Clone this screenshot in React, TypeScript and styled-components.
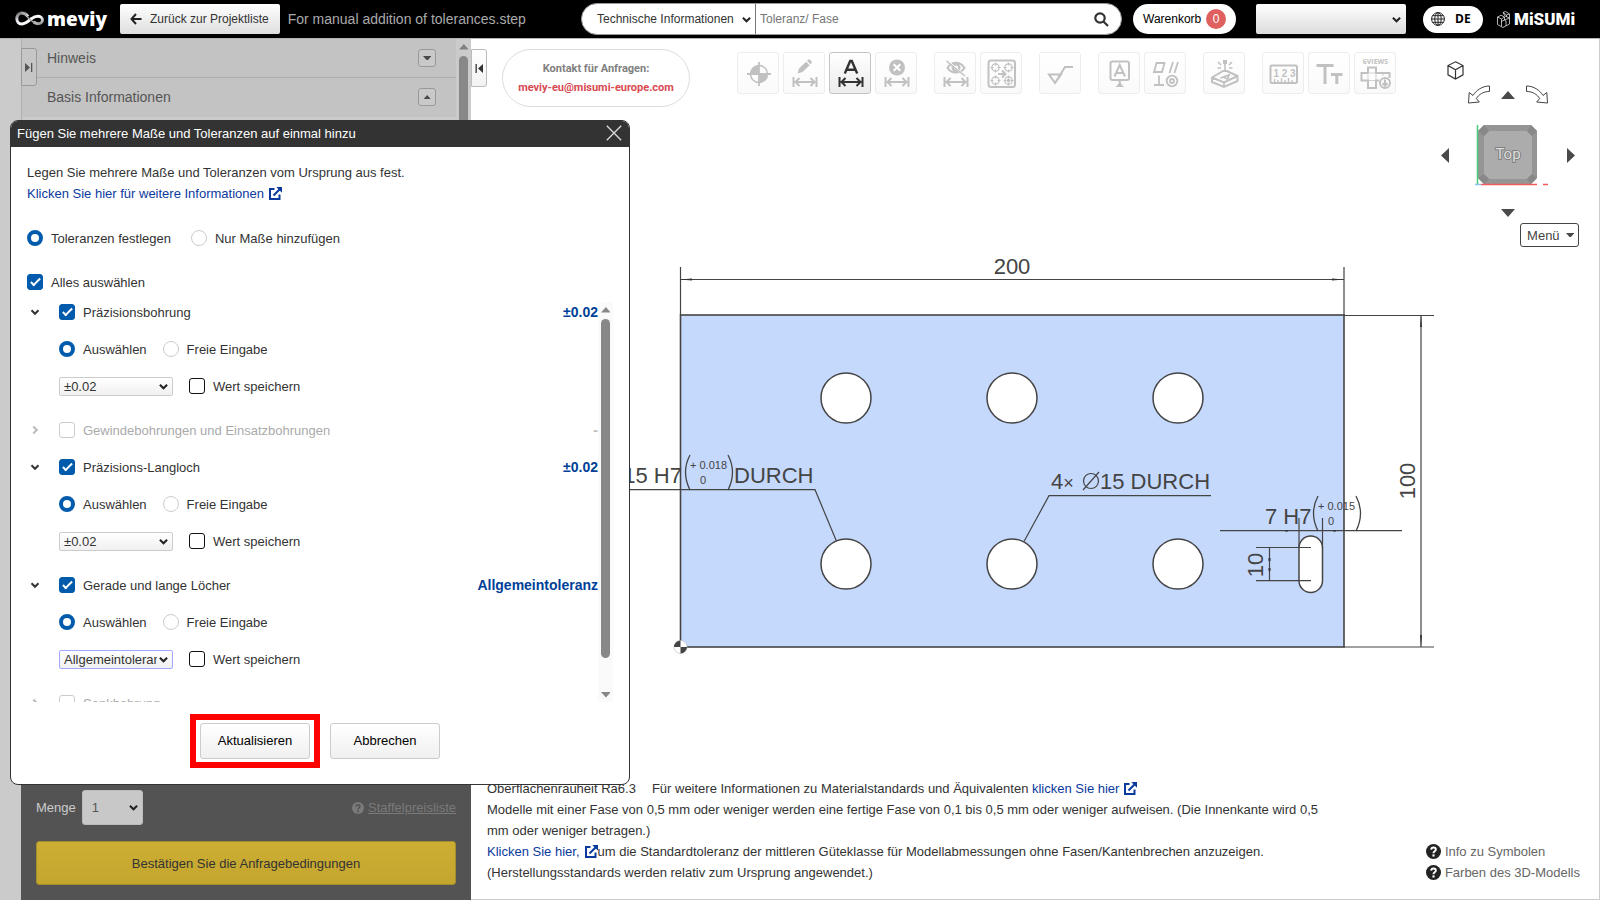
import React from 'react';
import styled, { createGlobalStyle, css } from 'styled-components';

const GlobalStyle = createGlobalStyle`
  *, *::before, *::after { box-sizing: border-box; }
  body { margin: 0; background: #fff; color: #333; font: 13px/21px "Liberation Sans", Arial, sans-serif; }
  button, input, select { font: inherit; color: inherit; margin: 0; }
  button { cursor: pointer; padding: 0; }
  a { color: #0a3a9e; text-decoration: none; }
  svg { display: block; flex: none; }
`;

/* ---------- frame ---------- */

const Page = styled.div`
  position: relative;
  display: flex;
  flex-direction: column;
  min-height: 100vh;
  overflow: hidden;
`;

const Main = styled.div`
  flex: 1;
  display: flex;
  border-top: 1px solid #b5b5b5;
`;

/* ---------- header ---------- */

const Header = styled.header`
  display: flex;
  align-items: center;
  height: 38px;
  padding: 0 29px 0 15px;
  background: #000;
  font-size: 12px;
`;

const Brand = styled.a`
  display: flex;
  align-items: center;
  gap: 2px;
  width: 105px;
  color: #fff;
  font: 800 19px/24px "Open Sans", sans-serif;
`;

const BackButton = styled.button`
  display: flex;
  align-items: center;
  gap: 8px;
  height: 30px;
  padding: 0 11px 0 10px;
  border: 0;
  border-radius: 2px;
  background: linear-gradient(#fff, #dedede);
  white-space: nowrap;
`;

const FileName = styled.span`
  margin-left: 8px;
  color: #aaa;
  font-size: 14px;
  white-space: nowrap;
`;

const Search = styled.form`
  display: flex;
  align-items: center;
  width: 541px;
  height: 32px;
  margin: 0 11px 0 auto;
  padding: 0 12px 0 15px;
  border: 1px solid #999;
  border-radius: 16px;
  background: #fff;
`;

const SelectBox = styled.span`
  position: relative;
  display: inline-flex;
  align-items: center;
`;

const SelectArrow = styled.svg`
  position: absolute;
  right: 5px;
  pointer-events: none;
`;

const SearchSelect = styled.select`
  appearance: none;
  width: 159px;
  height: 30px;
  padding: 0;
  border: 0;
  border-right: 1px solid #777;
  background: transparent;
`;

const SearchInput = styled.input`
  flex: 1;
  min-width: 0;
  height: 28px;
  padding: 0 4px;
  border: 0;
  background: transparent;
  &::placeholder { color: #757575; }
`;

const IconButton = styled.button`
  display: grid;
  place-items: center;
  border: 0;
  background: transparent;
`;

const Cart = styled.button`
  display: flex;
  align-items: center;
  justify-content: space-between;
  width: 103px;
  height: 30px;
  margin-right: 20px;
  padding: 0 10px;
  border: 0;
  border-radius: 15px;
  background: #fff;
  color: #000;
`;

const Badge = styled.span`
  width: 20px;
  height: 20px;
  border-radius: 10px;
  background: #e06060;
  color: #fff;
  line-height: 20px;
  text-align: center;
`;

const UserSelect = styled.select`
  appearance: none;
  width: 150px;
  height: 30px;
  border: 0;
  border-radius: 2px;
  background: linear-gradient(#fff, #dcdcdc);
`;

const Language = styled.button`
  display: flex;
  align-items: center;
  gap: 10px;
  width: 60px;
  height: 27px;
  margin: 0 14px 0 17px;
  padding: 0 8px;
  border: 0;
  border-radius: 14px;
  background: #fff;
  color: #000;
  font: 700 12px/16px "Open Sans", sans-serif;
`;

const Misumi = styled.a`
  display: flex;
  align-items: center;
  gap: 4px;
  width: 74px;
  color: #fff;
  font: 900 17px/24px Roboto, sans-serif;
`;

/* ---------- side panel ---------- */

const Gutter = styled.div`
  width: 21px;
  background: #cbcbcb;
`;

const SidePanel = styled.aside`
  position: relative;
  display: flex;
  flex-direction: column;
  width: 450px;
  background: #cbcbcb;
  color: #555;
`;

const SideScroll = styled.div`
  flex: 1;
  display: flex;
  align-items: stretch;
`;

const SideSections = styled.div`
  flex: 1;
  border-left: 1px solid #aeaeae;
`;

const SideRow = styled.div`
  display: flex;
  align-items: center;
  justify-content: space-between;
  height: 39px;
  padding: 0 20px 0 25px;
  border-bottom: 1px solid #adadad;
  background: #c3c3c3;
  font-size: 14px;
  &:last-child { border-bottom-color: #c3c3c3; }
`;

const SideToggle = styled.button`
  display: grid;
  place-items: center;
  width: 18px;
  height: 18px;
  border: 1px solid #999;
  border-radius: 3px;
  background: #c9c9c9;
`;

const ScrollTrack = styled.div<{ $tone?: string }>`
  display: flex;
  flex-direction: column;
  align-items: center;
  gap: 6px;
  width: 15px;
  padding: 5px 0 4px;
  background: ${(p) => p.$tone || '#fafafa'};
`;

const ScrollThumb = styled.div<{ $size?: number }>`
  width: 9px;
  border-radius: 5px;
  background: #888;
  ${(p) => (p.$size ? css`height: ${p.$size}px; margin-bottom: auto;` : css`flex: 1;`)}
`;

const EdgeTab = styled.button<{ $dim?: boolean }>`
  position: absolute;
  left: 0;
  top: ${(p) => (p.$dim ? 9 : 10)}px;
  display: grid;
  place-items: center;
  width: 16px;
  height: 38px;
  border: 1px solid ${(p) => (p.$dim ? '#999' : '#bbb')};
  border-radius: 0 3px 3px 0;
  background: ${(p) => (p.$dim ? '#c6c6c6' : 'linear-gradient(#fff, #f2f2f2)')};
`;

const OrderBar = styled.div`
  display: flex;
  flex-direction: column;
  gap: 16px;
  padding: 20px 15px 15px;
  background: #535353;
`;

const OrderRow = styled.div`
  display: flex;
  align-items: center;
  justify-content: space-between;
`;

const QuantityLabel = styled.label`
  display: flex;
  align-items: center;
  gap: 6px;
  color: #ccc;
`;

const QuantitySelect = styled.select`
  appearance: none;
  width: 61px;
  height: 35px;
  padding: 0 9px;
  border: 1px solid #bbb;
  border-radius: 3px;
  background: #c8c8c8;
  color: #555;
`;

const PriceLink = styled.a`
  display: flex;
  align-items: center;
  gap: 4px;
  color: #7a7a7a;
  span { text-decoration: underline; }
`;

const ConfirmButton = styled.button`
  height: 44px;
  border: 1px solid #a38d2c;
  border-radius: 3px;
  background: linear-gradient(#ccae33, #c4a62f);
  color: #333;
`;

/* ---------- viewer ---------- */

const Viewer = styled.main`
  position: relative;
  flex: 1;
  min-width: 0;
  display: flex;
  flex-direction: column;
  border: solid #ccc;
  border-width: 0 1px 1px 0;
`;

const ViewerTop = styled.div`
  display: flex;
  align-items: flex-start;
  height: 218px;
  padding: 10px 20px 0 31px;
`;

const Contact = styled.div`
  width: 188px;
  height: 58px;
  padding-top: 9px;
  border: 1px solid #ddd;
  border-radius: 29px;
  color: #808080;
  font: 700 11px/19px Roboto, "Liberation Sans", sans-serif;
  text-align: center;
  white-space: nowrap;
  a { display: block; color: #d84a52; }
`;

const Toolbar = styled.div`
  display: flex;
  gap: 17px;
  margin: 3px auto 0 47px;
`;

const ToolGroup = styled.div`
  display: flex;
  gap: 4px;
`;

const Tool = styled.button<{ $active?: boolean }>`
  display: grid;
  place-items: center;
  width: 42px;
  height: 42px;
  border: 1px solid ${(p) => (p.$active ? '#c4c4c4' : '#ededed')};
  border-radius: 3px;
  background: ${(p) => (p.$active ? 'linear-gradient(#fff, #ececec)' : 'linear-gradient(#fff, #fafafa)')};
  color: ${(p) => (p.$active ? '#333' : '#c1c1c1')};
`;

const Navigator = styled.div`
  display: flex;
  flex-direction: column;
  width: 142px;
  padding-top: 12px;
`;

const HomeView = styled(IconButton)`
  align-self: flex-start;
  margin-left: 10px;
`;

const NavRow = styled.div<{ $gap: number; $top: number }>`
  display: flex;
  align-items: center;
  justify-content: center;
  gap: ${(p) => p.$gap}px;
  margin-top: ${(p) => p.$top}px;
`;

const MenuButton = styled.button`
  display: flex;
  align-items: center;
  align-self: flex-end;
  gap: 6px;
  height: 24px;
  margin-top: 6px;
  padding: 0 4px 0 6px;
  border: 1px solid #444;
  border-radius: 3px;
  background: #fff;
  color: #444;
`;

const Stage = styled.div`
  flex: 1;
  display: flex;
  svg { overflow: visible; }
`;

const Notes = styled.footer`
  display: flex;
  align-items: flex-end;
  justify-content: space-between;
  padding: 0 19px 16px 16px;
`;

const NoteText = styled.div`
  max-width: 835px;
  p { margin: 0; }
`;

const InlineLink = styled.a`
  white-space: nowrap;
  svg { display: inline-block; vertical-align: -2px; margin-left: 5px; }
`;

const Spaced = styled.span`
  margin-left: 16px;
`;

const HelpLinks = styled.nav`
  a { display: flex; align-items: center; gap: 4px; color: #666; }
`;

/* ---------- dialog ---------- */

const Dialog = styled.section`
  position: absolute;
  left: 10px;
  top: 120px;
  width: 620px;
  border: 1px solid #333;
  border-radius: 8px;
  overflow: hidden;
  background: #fff;
`;

const DialogTitle = styled.div`
  display: flex;
  align-items: center;
  justify-content: space-between;
  height: 26px;
  padding: 0 7px 2px 6px;
  background: #333;
  color: #fff;
  h1 { margin: 0; font-size: 13px; font-weight: 400; }
`;

const DialogBody = styled.div`
  padding: 15px 16px 16px;
  p { margin: 0; }
`;

const Row = styled.div<{ $gap?: number; $top?: number; $indent?: boolean }>`
  display: flex;
  align-items: center;
  height: 20px;
  gap: ${(p) => p.$gap || 16}px;
  margin-top: ${(p) => p.$top || 0}px;
  padding-left: ${(p) => (p.$indent ? 32 : 0)}px;
`;

const Choice = styled.label<{ $off?: boolean }>`
  display: flex;
  align-items: center;
  gap: 8px;
  color: ${(p) => (p.$off ? '#aaa' : '#333')};
  white-space: nowrap;
`;

const Radio = styled.input.attrs({ type: 'radio' })`
  appearance: none;
  width: 16px;
  height: 16px;
  border: 1px solid #ccc;
  border-radius: 50%;
  background: #fff;
  &:checked { border: 4px solid #005bac; }
`;

const Check = styled.input.attrs({ type: 'checkbox' })`
  appearance: none;
  display: grid;
  place-items: center;
  width: 16px;
  height: 16px;
  border: 1px solid #111;
  border-radius: 3px;
  background: #fff;
  &:disabled { border-color: #ccc; }
  &:checked { border-color: #005bac; background: #005bac; }
  &:checked::after {
    content: '';
    width: 5px;
    height: 10px;
    margin-bottom: 3px;
    border: solid #fff;
    border-width: 0 2px 2px 0;
    rotate: 45deg;
  }
`;

const ListFrame = styled.div`
  display: flex;
  height: 400px;
  margin-top: 10px;
`;

const List = styled.div`
  flex: 1;
  overflow: hidden;
`;

const Group = styled.section<{ $open: boolean }>`
  display: flex;
  flex-direction: column;
  gap: 17px;
  padding-bottom: ${(p) => (p.$open ? 24 : 17)}px;
`;

const Expander = styled(IconButton)`
  width: 16px;
  height: 16px;
`;

const Value = styled.strong<{ $off?: boolean }>`
  margin-left: auto;
  color: ${(p) => (p.$off ? '#bbb' : '#003f98')};
  font-size: 14px;
`;

const ToleranceSelect = styled.select<{ $focus?: boolean }>`
  appearance: none;
  width: 114px;
  height: 19px;
  padding: 0 15px 0 4px;
  border: 1px solid ${(p) => (p.$focus ? '#a0a8ff' : '#ccc')};
  border-radius: 2px;
  background: linear-gradient(#fff, #f0f0f0);
  line-height: 17px;
`;

const Actions = styled.div`
  display: flex;
  align-items: center;
  gap: 10px;
  margin-top: 12px;
  padding-left: 163px;
`;

const Highlight = styled.div`
  padding: 3px 4px;
  border: 6px solid #f00;
`;

const ActionButton = styled.button`
  display: block;
  width: 110px;
  height: 36px;
  padding-bottom: 2px;
  border: 1px solid #ccc;
  border-radius: 3px;
  background: linear-gradient(#fff, #f0f0f0);
  color: #000;
`;

/* ---------- icons ---------- */

const Chevron = ({ dir = 'down', color = '#333' }: { dir?: 'down' | 'right'; color?: string }) => (
  <svg width="10" height="10" viewBox="0 0 10 10" fill="none" stroke={color} strokeWidth="2">
    <path d={dir === 'down' ? 'M1.5 3.3 5 6.8 8.5 3.3' : 'M3.3 1.5 6.8 5 3.3 8.5'} />
  </svg>
);

const DropArrow = () => (
  <SelectArrow width="9" height="9" viewBox="0 0 10 10" fill="none" stroke="#222" strokeWidth="2.200">
    <path d="M1 3 5 7 9 3" />
  </SelectArrow>
);

const triangles = {
  up: 'M0 8 7 0 14 8Z',
  down: 'M0 0H14L7 8Z',
  left: 'M8 0V15L0 7.5Z',
  right: 'M0 0V15L8 7.5Z',
};

const Triangle = ({ dir, scale = 1, color = '#4a4a4a' }: { dir: keyof typeof triangles; scale?: number; color?: string }) => {
  const [w, h] = dir === 'up' || dir === 'down' ? [14, 8] : [8, 15];
  return (
    <svg width={w * scale} height={h * scale} viewBox={`0 0 ${w} ${h}`} fill={color}>
      <path d={triangles[dir]} />
    </svg>
  );
};

const ExternalIcon = () => (
  <svg width="13" height="13" viewBox="0 0 13 13" fill="none" stroke="#0a3a9e" strokeWidth="2">
    <path d="M5.5 2H1v10h9.500V7.500M4.500 8.500 11 2" />
    <path d="M7.300 0H13v5.700Z" fill="#0a3a9e" stroke="none" />
  </svg>
);

const HelpIcon = ({ size = 14, color, mark }: { size?: number; color: string; mark: string }) => (
  <svg width={size} height={size} viewBox="0 0 14 14">
    <circle cx="7" cy="7" r="7" fill={color} />
    <path d="M4.800 5.300C5 2.600 9.200 2.700 9.200 5.200 9.200 6.900 7 6.800 7 8.600" fill="none" stroke={mark} strokeWidth="1.800" />
    <rect x="6" y="9.700" width="2" height="2" fill={mark} />
  </svg>
);

const MeviyMark = () => (
  <svg width="30" height="18" viewBox="0 0 30 18" fill="none">
    <defs>
      <linearGradient id="loop" x1="0" y1="0" x2="1" y2="1">
        <stop offset="0" stopColor="#666" />
        <stop offset=".35" stopColor="#e6e2ea" />
        <stop offset=".6" stopColor="#fff" />
        <stop offset="1" stopColor="#888" />
      </linearGradient>
    </defs>
    <path d="M13 6.500C11.500 4.300 9.500 3 6.800 3 3.500 3 1.800 5.700 1.800 8.500c0 3.200 2 5.500 4.800 5.500 4 0 6.500-3 9.700-5.200 2.500-1.800 4.200-2.600 6.200-2.600 3 0 5 1.700 5 3.800s-2 3.800-4.300 3.800c-1.800 0-3.200-.8-4.700-2" stroke="url(#loop)" strokeWidth="3" />
    <path d="M6 2.500C10 2 11.500 7 15 9.500c1.500 1 3 2.500 5 3.500" stroke="#aaa" strokeWidth="1.500" />
  </svg>
);

const MisumiMark = () => (
  <svg width="13" height="17" viewBox="0 0 13 17" fill="none" stroke="#ddd" strokeWidth=".8">
    <path d="M.5 6 4 4.300 7.500 6v3L12.500 7v6L6 16.500.5 13.500ZM.5 6 4.500 8v7.500M4.500 8l3-2M4.500 10.500 7.500 9M6 1.500 8.500.5 12.500 3v4L8 5ZM6 1.500 9.500 4v2M9.500 4l3-1M7.500 9 9 10v5" />
  </svg>
);

const GlobeIcon = () => (
  <svg width="14" height="14" viewBox="0 0 14 14" fill="none" stroke="#222">
    <circle cx="7" cy="7" r="6.400" />
    <ellipse cx="7" cy="7" rx="3.200" ry="6.400" />
    <path d="M7 .5v13M.5 7h13M1.500 3.700h11M1.500 10.300h11" />
  </svg>
);

const DimArrow = () => (
  <path d="M9.500 24v10M32.500 24v10M11.500 29h19M15.500 25l-4 4 4 4M26.500 25l4 4-4 4" strokeWidth="2" />
);

const ToolIcon = ({ children }: { children: React.ReactNode }) => (
  <svg width="42" height="42" viewBox="0 0 42 42" fill="none" stroke="currentColor" strokeWidth="2">
    {children}
  </svg>
);

const tools: { label: string; active?: boolean; icon: React.ReactNode }[][] = [
  [
    {
      label: 'Ursprung',
      icon: (
        <>
          <circle cx="21" cy="21" r="8.500" strokeWidth="1.500" />
          <path d="M21 9v24M9 21h24" strokeWidth="1.800" />
          <path d="M21 21h-8.500a8.500 8.500 0 0 1 8.500-8.500ZM21 21h8.500a8.500 8.500 0 0 1-8.500 8.500Z" fill="currentColor" stroke="none" />
        </>
      ),
    },
    {
      label: 'Maß bearbeiten',
      icon: (
        <>
          <path d="M13.500 20.500 15 15.500 22 8.800 25.700 12.300 18.500 19Z M23 7.800l1-1c1.500-1 4.500 1.500 3.500 3.500l-1 1Z" fill="currentColor" stroke="none" />
          <DimArrow />
        </>
      ),
    },
    {
      label: 'Mehrere Maße',
      active: true,
      icon: (
        <>
          <path d="M14.800 20.500 20.200 8h1.600L27.200 20.500M16.500 16.800h9" strokeWidth="2.400" />
          <DimArrow />
        </>
      ),
    },
    {
      label: 'Maß löschen',
      icon: (
        <>
          <circle cx="21" cy="14.500" r="8" fill="currentColor" stroke="none" />
          <path d="m17.700 11.200 6.600 6.600M24.300 11.200l-6.600 6.600" stroke="#fff" />
          <DimArrow />
        </>
      ),
    },
  ],
  [
    {
      label: 'Maß ausblenden',
      icon: (
        <>
          <path d="M12.500 15c4-7 13-7 17 0-4 6-13 6-17 0Z" />
          <circle cx="21" cy="14.500" r="3.300" strokeWidth="2.400" />
          <path d="M13 8.500 29.500 22.500" stroke="#fff" />
          <path d="M11.500 8 30 23" strokeWidth="1.600" />
          <DimArrow />
        </>
      ),
    },
    {
      label: 'Bohrungen gruppieren',
      icon: (
        <>
          <rect x="7.500" y="7.500" width="26.500" height="26.500" rx="2.500" />
          {[[14.5, 14.5], [27.5, 14.5], [14.5, 27.5], [27.5, 27.5]].map(([x, y]) => (
            <g key={`${x}-${y}`} strokeWidth="1.200">
              <circle cx={x} cy={y} r="3.700" />
              <path d={`M${x - 5} ${y}h3M${x + 2} ${y}h3M${x} ${y - 5}v3M${x} ${y + 2}v3`} />
            </g>
          ))}
          <circle cx="27.500" cy="27.500" r="1.800" fill="currentColor" stroke="none" />
          <path d="M17 21h7M21 17.500l3.500 3.500-3.500 3.500" />
        </>
      ),
    },
  ],
  [{ label: 'Oberflächenrauheit', icon: <path d="M9 21.500h12L15 30ZM15 30 25 14h8" /> }],
  [
    {
      label: 'Beschriftung',
      icon: (
        <>
          <rect x="11.500" y="8.500" width="18.500" height="18.500" rx="2" />
          <path d="M15.500 23.500 20.700 12 26 23.500M17.200 20h7" />
          <path d="M20.700 27v3" />
          <path d="M16.500 34l2-2 2.300-3.500L23 32l2 2Z" fill="currentColor" stroke="none" />
        </>
      ),
    },
    {
      label: 'Form- und Lagetoleranz',
      icon: (
        <>
          <path d="M11.500 10h8l-2.500 9h-8ZM28 9l-3.500 11M33 9l-3.500 11M9 32h10M14 22.500V32" strokeWidth="1.800" />
          <circle cx="27" cy="28" r="5.300" strokeWidth="1.800" />
          <circle cx="27" cy="28" r="2" strokeWidth="1.800" />
        </>
      ),
    },
  ],
  [
    {
      label: 'Gravur',
      icon: (
        <>
          <path d="M8 24.500 19 18h4l10.500 5v5L20 34 8 29ZM8 24.500l12 5 13.500-6.500M20 29.500V34" />
          <path d="m16.500 25 8.500-3-1.500 4.500M19.500 24l3.500 2" strokeWidth="1.800" />
          <path d="M21 7v4" strokeWidth="4" />
          <path d="M21 11v6M14 9l3 3M28 9l-3 3M13.500 15h3.500M28.500 15H25" strokeWidth="1.600" />
        </>
      ),
    },
  ],
  [
    {
      label: 'Messen',
      icon: (
        <>
          <rect x="7.500" y="12.500" width="26.500" height="17.500" rx="1.500" />
          <path d="M11.500 30v-4M15 30v-3M18.500 30v-5M22 30v-3M25.500 30v-5M29 30v-3" strokeWidth="1.300" />
          <text x="21.500" y="24" textAnchor="middle" fontSize="10" fontWeight="700" fill="currentColor" stroke="none">1 2 3</text>
        </>
      ),
    },
    { label: 'Textgröße', icon: <path d="M7.500 12.500h17M16 12.500V31M22 21.500h11.500M27.800 21.500V31" strokeWidth="3" /> },
    {
      label: 'Sechs Ansichten',
      icon: (
        <>
          <text x="20.500" y="11" textAnchor="middle" fontSize="7" fontWeight="700" fontFamily="Open Sans" fill="currentColor" stroke="none">6VIEWS</text>
          <path d="M13 20v-5.500h8V20h13.500v5M24 27.500h-3V35h-8v-7.500H6.500V20H13" />
          <path d="M13 20v7.500M21 20v7.500M13 20h8M13 27.500h8M28 20v3" strokeWidth=".7" />
          <circle cx="30" cy="30" r="5" />
          <path d="M30 26.500v6M27.500 30.300l2.500 2.500 2.500-2.500" />
        </>
      ),
    },
  ],
];

/* ---------- view cube ---------- */

const RotateArrow = ({ flip }: { flip?: boolean }) => (
  <svg width="22" height="19" viewBox="0 0 22 19" fill="#fff" stroke="#444">
    <path transform={flip ? 'translate(22 0) scale(-1 1)' : undefined} d="M21.500 1C14 1 8 5.500 5 10.500L1.200 7.500.5 18l10.800-1-3-3.500C11 9.500 15 6.500 21.500 6.500Z" />
  </svg>
);

const ViewCube = () => (
  <svg width="86" height="73" viewBox="-10 0 86 73">
    <path d="M9 6h47l6 6v47l-6 6H9l-6-6V12Z" fill="#959595" />
    <path d="M14 12h38l5 5v38l-5 5H14l-5-5V17Z" fill="#acacac" />
    <path d="M3 12l6-6 5 6-5 5ZM56 6l6 6-5 5-5-5ZM3 59l6 6 5-5-5-5ZM62 59l-6 6-4-5 5-5Z" fill="#888" />
    <path d="M2.500 -6v5M2.500 6v59" stroke="#4c7" strokeWidth="1.500" />
    <path d="M6 65.500h56M68 65.500h5" stroke="#f15b5b" strokeWidth="1.500" />
    <path d="M0 65.500h6" stroke="#8bc4f0" strokeWidth="1.500" />
    <text x="33" y="40" textAnchor="middle" fontSize="15" fontFamily="Roboto, sans-serif" fill="#ddd" stroke="#808080" strokeWidth="2" paintOrder="stroke">Top</text>
  </svg>
);

/* ---------- part drawing ---------- */

const Deviation = ({ x, y, upper, width }: { x: number; y: number; upper: string; width: number }) => (
  <g>
    <path d={`M${x + 5} ${y - 28}q-9 17 0 35M${x + width - 5} ${y - 28}q9 17 0 35`} fill="none" stroke="#444" strokeWidth="1.300" />
    <text x={x + 5} y={y - 14} fontSize="11">{upper}</text>
    <text x={x + 15} y={y + 1} fontSize="11">0</text>
  </g>
);

const PartDrawing = () => (
  <svg width="971" height="404" viewBox="471 257 971 404" fontSize="22" fill="#444" fontFamily="Liberation Sans, sans-serif">
    <rect x="680.500" y="315" width="663.500" height="332" fill="#c5d9fd" stroke="#444" strokeWidth="1.600" />
    <g fill="#fff" stroke="#444" strokeWidth="1.500">
      {[846, 1012, 1178].map((x) => [398, 564].map((y) => <circle key={`${x}-${y}`} cx={x} cy={y} r="25" />))}
      <rect x="1299" y="536" width="23.500" height="56.500" rx="11.700" />
    </g>
    <g fill="none" stroke="#444" strokeWidth="1.200">
      <path d="M680.500 267v48M1344 267v48M680.500 279.500H1344" />
      <path d="M1344 315.500h90M1344 647h90M1421 315v332" />
      <path d="M600 489.700h215l21.500 51.500M1024 541.500l25-45.800h162" />
      <path d="M1220 530.700h182M1299 518v30M1322.500 518v30" />
      <path d="M1256 547.500h55M1256 580.700h55M1269.500 547.500v33.200" />
    </g>
    <g fill="#333">
      <path d="M680 279.500l12-1v2ZM1344 279.500l-12-1v2ZM1421 315l-1 12h2ZM1421 647l-1-12h2Z" />
      <path d="M1288 530h-3v1.500h3ZM1336 530h-3v1.500h3ZM1268.500 558h2v3h-2ZM1268.500 568h2v3h-2Z" />
    </g>
    <text x="1012" y="274" textAnchor="middle">200</text>
    <text transform="translate(1415 481) rotate(-90)" textAnchor="middle">100</text>
    <text transform="translate(1263 565) rotate(-90)" textAnchor="middle">10</text>
    <text x="682" y="483" textAnchor="end">15 H7</text>
    <Deviation x={685} y={483} upper="+ 0.018" width={48} />
    <text x="734" y="483">DURCH</text>
    <text x="1051" y="489">4<tspan fontSize="18">×</tspan></text>
    <g fill="none" stroke="#444" strokeWidth="1.200">
      <circle cx="1091" cy="481" r="7.500" />
      <path d="M1083 490l16-18" />
    </g>
    <text x="1100" y="489">15 DURCH</text>
    <text x="1265" y="524">7 H7</text>
    <Deviation x={1313} y={524} upper="+ 0.015" width={48} />
    <circle cx="680.500" cy="647" r="6.500" fill="#fff" stroke="#bbb" strokeWidth=".6" />
    <path d="M680.500 647H674a6.500 6.500 0 0 1 6.500-6.500ZM680.500 647h6.500a6.500 6.500 0 0 1-6.500 6.500Z" fill="#444" />
  </svg>
);

/* ---------- tolerance list ---------- */

interface Feature {
  name: string;
  value: string;
  open: boolean;
  focus?: boolean;
}

const features: Feature[] = [
  { name: 'Präzisionsbohrung', value: '±0.02', open: true },
  { name: 'Gewindebohrungen und Einsatzbohrungen', value: '-', open: false },
  { name: 'Präzisions-Langloch', value: '±0.02', open: true },
  { name: 'Gerade und lange Löcher', value: 'Allgemeintoleranz', open: true, focus: true },
  { name: 'Senkbohrung', value: '', open: false },
];

const FeatureGroup = ({ name, value, open, focus }: Feature) => (
  <Group $open={open}>
    <Row>
      <Expander type="button" aria-label={name} aria-expanded={open}>
        <Chevron dir={open ? 'down' : 'right'} color={open ? '#333' : '#bbb'} />
      </Expander>
      <Choice $off={!open}>
        <Check defaultChecked={open} disabled={!open} />
        {name}
      </Choice>
      <Value $off={!open}>{value}</Value>
    </Row>
    {open && (
      <>
        <Row $indent>
          <Choice><Radio name={name} defaultChecked />Auswählen</Choice>
          <Choice><Radio name={name} />Freie Eingabe</Choice>
        </Row>
        <Row $indent>
          <SelectBox>
            <ToleranceSelect $focus={focus} aria-label={`Toleranz ${name}`}>
              <option>{value}</option>
            </ToleranceSelect>
            <DropArrow />
          </SelectBox>
          <Choice><Check />Wert speichern</Choice>
        </Row>
      </>
    )}
  </Group>
);

const ToleranceDialog = () => (
  <Dialog role="dialog" aria-labelledby="dialog-title">
    <DialogTitle>
      <h1 id="dialog-title">Fügen Sie mehrere Maße und Toleranzen auf einmal hinzu</h1>
      <IconButton type="button" aria-label="Schließen">
        <svg width="16" height="16" viewBox="0 0 16 16" stroke="#ddd" strokeWidth="1.300">
          <path d="M.8.8l14.400 14.400M15.200.8.8 15.200" />
        </svg>
      </IconButton>
    </DialogTitle>
    <DialogBody>
      <p>Legen Sie mehrere Maße und Toleranzen vom Ursprung aus fest.</p>
      <p><InlineLink href="#info">Klicken Sie hier für weitere Informationen<ExternalIcon /></InlineLink></p>
      <Row $gap={20} $top={24}>
        <Choice><Radio name="mode" defaultChecked />Toleranzen festlegen</Choice>
        <Choice><Radio name="mode" />Nur Maße hinzufügen</Choice>
      </Row>
      <Row $top={24}>
        <Choice><Check defaultChecked />Alles auswählen</Choice>
      </Row>
      <ListFrame>
        <List>
          {features.map((f) => <FeatureGroup key={f.name} {...f} />)}
        </List>
        <ScrollTrack>
          <Triangle dir="up" scale={0.7} color="#888" />
          <ScrollThumb $size={339} />
          <Triangle dir="down" scale={0.7} color="#888" />
        </ScrollTrack>
      </ListFrame>
      <Actions>
        <Highlight><ActionButton type="button">Aktualisieren</ActionButton></Highlight>
        <ActionButton type="button">Abbrechen</ActionButton>
      </Actions>
    </DialogBody>
  </Dialog>
);

/* ---------- page ---------- */

const TopBar = () => (
  <Header>
    <Brand href="#home"><MeviyMark />meviy</Brand>
    <BackButton type="button">
      <svg width="12" height="12" viewBox="0 0 12 12" fill="none" stroke="#222" strokeWidth="2">
        <path d="M11.500 6H2M6 1 1.500 6 6 11" />
      </svg>
      Zurück zur Projektliste
    </BackButton>
    <FileName>For manual addition of tolerances.step</FileName>
    <Search>
      <SelectBox>
        <SearchSelect aria-label="Suchbereich"><option>Technische Informationen</option></SearchSelect>
        <DropArrow />
      </SelectBox>
      <SearchInput aria-label="Suche" placeholder="Toleranz/ Fase" />
      <IconButton type="button" aria-label="Suchen">
        <svg width="15" height="15" viewBox="0 0 15 15" fill="none" stroke="#333" strokeWidth="2.200">
          <circle cx="6" cy="6" r="4.700" />
          <path d="m9.500 9.500 4.500 4.500" />
        </svg>
      </IconButton>
    </Search>
    <Cart type="button">Warenkorb<Badge>0</Badge></Cart>
    <SelectBox>
      <UserSelect aria-label="Benutzerkonto"><option /></UserSelect>
      <DropArrow />
    </SelectBox>
    <Language type="button"><GlobeIcon />DE</Language>
    <Misumi href="#misumi"><MisumiMark />MiSUMi</Misumi>
  </Header>
);

const Side = () => (
  <SidePanel>
    <SideScroll>
      <SideSections>
        <SideRow>Hinweis<SideToggle aria-label="Hinweis öffnen"><Triangle dir="down" scale={0.6} /></SideToggle></SideRow>
        <SideRow>Basis Informationen<SideToggle aria-label="Basis Informationen schließen"><Triangle dir="up" scale={0.6} /></SideToggle></SideRow>
      </SideSections>
      <ScrollTrack $tone="#cbcbcb">
        <Triangle dir="up" scale={0.7} color="#808080" />
        <ScrollThumb />
      </ScrollTrack>
    </SideScroll>
    <EdgeTab $dim type="button" aria-label="Ausklappen">
      <svg width="8" height="9" viewBox="0 0 8 9" fill="#555"><path d="M0 0 5 4.500 0 9ZM6 0h1.300v9H6Z" /></svg>
    </EdgeTab>
    <OrderBar>
      <OrderRow>
        <QuantityLabel>
          Menge
          <SelectBox>
            <QuantitySelect><option>1</option></QuantitySelect>
            <DropArrow />
          </SelectBox>
        </QuantityLabel>
        <PriceLink href="#preise"><HelpIcon size={12} color="#7a7a7a" mark="#535353" /><span>Staffelpreisliste</span></PriceLink>
      </OrderRow>
      <ConfirmButton type="button">Bestätigen Sie die Anfragebedingungen</ConfirmButton>
    </OrderBar>
  </SidePanel>
);

export default function App() {
  return (
    <Page>
      <GlobalStyle />
      <TopBar />
      <Main>
        <Gutter />
        <Side />
        <Viewer>
          <EdgeTab type="button" aria-label="Einklappen">
            <svg width="8" height="9" viewBox="0 0 8 9" fill="#333"><path d="M8 0 3 4.500 8 9ZM.5 0h1.300v9H.5Z" /></svg>
          </EdgeTab>
          <ViewerTop>
            <Contact>
              Kontakt für Anfragen:
              <a href="mailto:meviy-eu@misumi-europe.com">meviy-eu@misumi-europe.com</a>
            </Contact>
            <Toolbar>
              {tools.map((group) => (
                <ToolGroup key={group[0].label}>
                  {group.map((t) => (
                    <Tool key={t.label} type="button" $active={t.active} aria-label={t.label}>
                      <ToolIcon>{t.icon}</ToolIcon>
                    </Tool>
                  ))}
                </ToolGroup>
              ))}
            </Toolbar>
            <Navigator>
              <HomeView type="button" aria-label="Isometrische Ansicht">
                <svg width="17" height="19" viewBox="0 0 17 19" fill="none" stroke="#333" strokeWidth="1.200">
                  <path d="M8.500.8 16 4.500v9.300L8.500 18 1 13.800V4.500ZM1 4.500 8.500 8.700 16 4.500M8.500 8.700V18" />
                </svg>
              </HomeView>
              <NavRow $gap={11} $top={5}>
                <IconButton type="button" aria-label="Links drehen"><RotateArrow /></IconButton>
                <IconButton type="button" aria-label="Nach oben"><Triangle dir="up" /></IconButton>
                <IconButton type="button" aria-label="Rechts drehen"><RotateArrow flip /></IconButton>
              </NavRow>
              <NavRow $gap={16} $top={15}>
                <IconButton type="button" aria-label="Nach links"><Triangle dir="left" /></IconButton>
                <ViewCube />
                <IconButton type="button" aria-label="Nach rechts"><Triangle dir="right" /></IconButton>
              </NavRow>
              <NavRow $gap={0} $top={17}>
                <IconButton type="button" aria-label="Nach unten"><Triangle dir="down" /></IconButton>
              </NavRow>
              <MenuButton type="button">Menü<Triangle dir="down" scale={0.6} /></MenuButton>
            </Navigator>
          </ViewerTop>
          <Stage><PartDrawing /></Stage>
          <Notes>
            <NoteText>
              <p>Oberflächenrauheit Ra6.3<Spaced>Für weitere Informationen zu Materialstandards und Äquivalenten </Spaced><InlineLink href="#material">klicken Sie hier<ExternalIcon /></InlineLink></p>
              <p>Modelle mit einer Fase von 0,5 mm oder weniger werden eine fertige Fase von 0,1 bis 0,5 mm oder weniger aufweisen. (Die Innenkante wird 0,5 mm oder weniger betragen.)</p>
              <p><InlineLink href="#toleranz">Klicken Sie hier,<ExternalIcon /></InlineLink>um die Standardtoleranz der mittleren Güteklasse für Modellabmessungen ohne Fasen/Kantenbrechen anzuzeigen.</p>
              <p>(Herstellungsstandards werden relativ zum Ursprung angewendet.)</p>
            </NoteText>
            <HelpLinks>
              <a href="#symbole"><HelpIcon size={15} color="#222" mark="#fff" />Info zu Symbolen</a>
              <a href="#farben"><HelpIcon size={15} color="#222" mark="#fff" />Farben des 3D-Modells</a>
            </HelpLinks>
          </Notes>
        </Viewer>
      </Main>
      <ToleranceDialog />
    </Page>
  );
}
